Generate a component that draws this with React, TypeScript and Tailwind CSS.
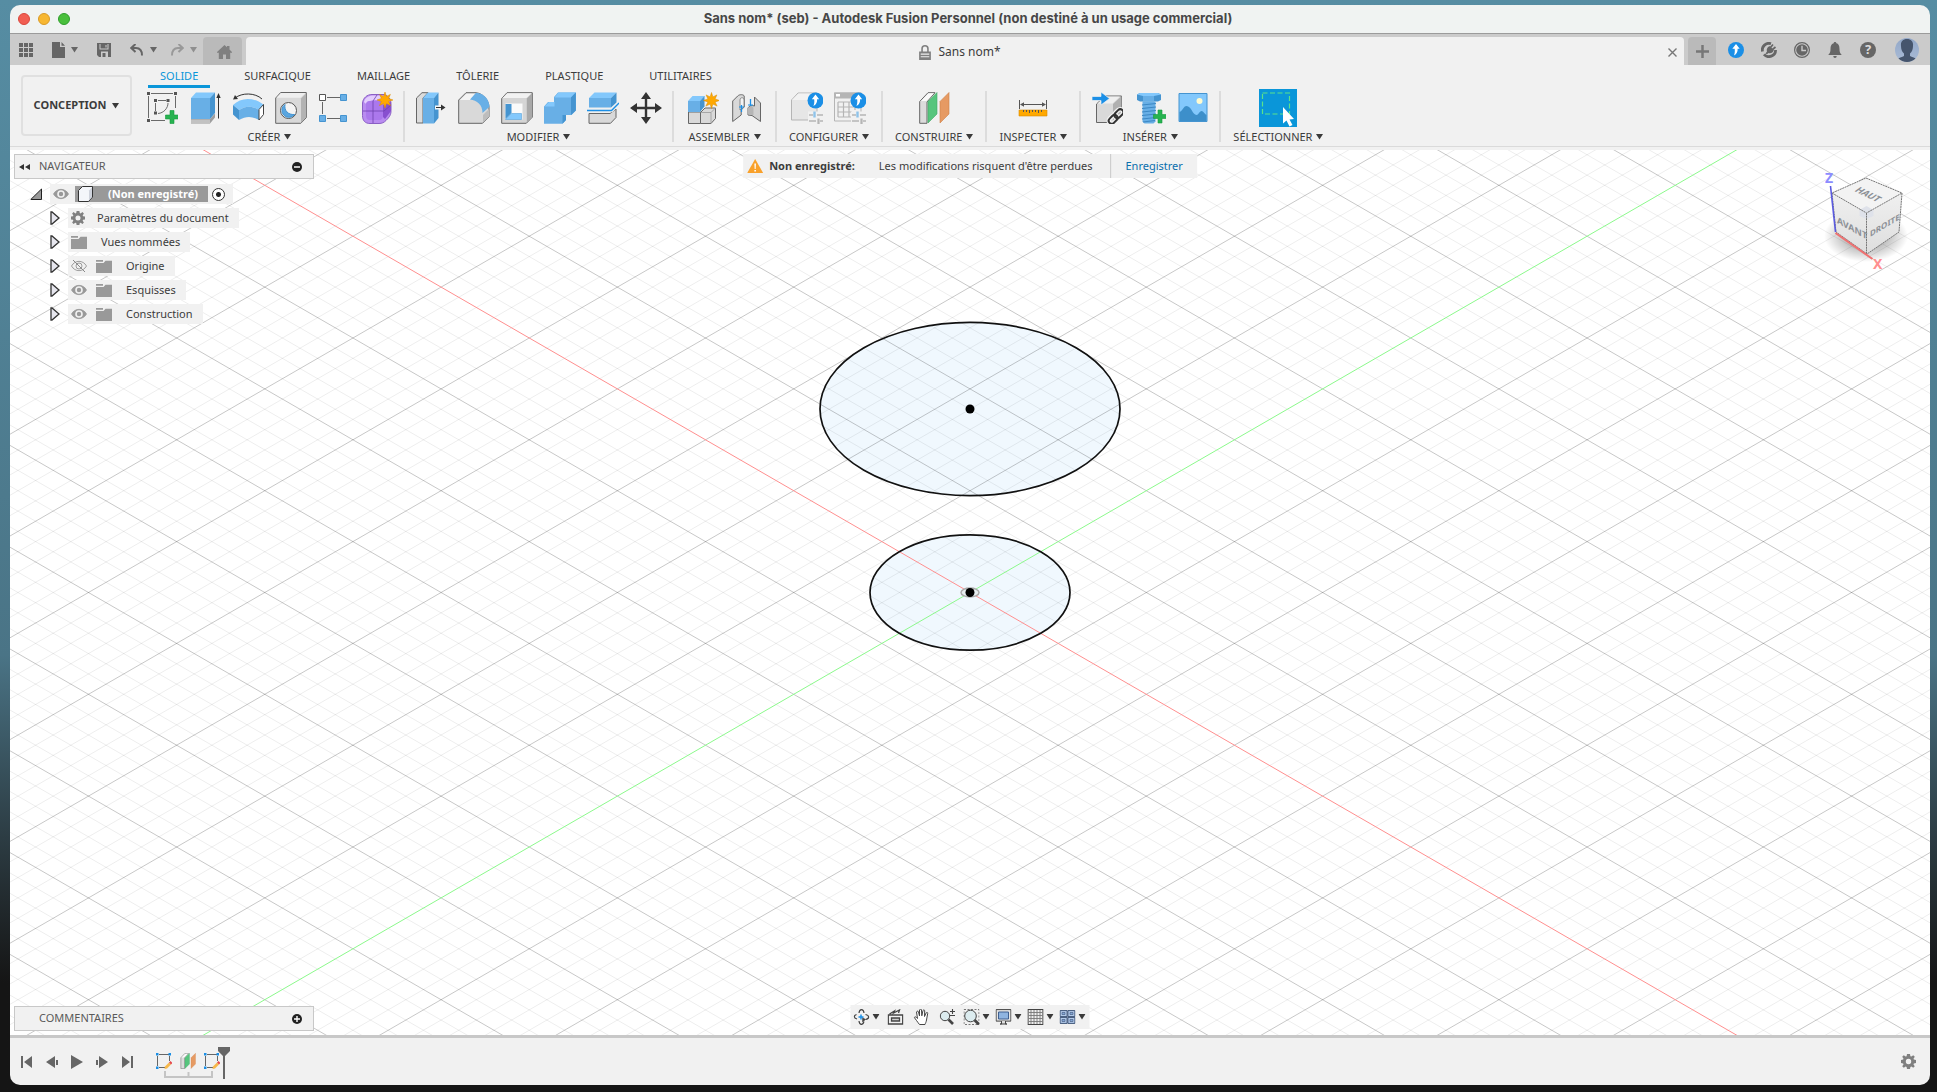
import type { ReactNode } from 'react';

const Caret = ({ className = 'fill-[#3a3a3a]' }: { className?: string }) => (
  <svg width="7" height="6" viewBox="0 0 7 6" className={className} aria-hidden="true">
    <path d="M0 0h7L3.5 5.5z" />
  </svg>
);

const Icon32 = ({ children }: { children: ReactNode }) => (
  <svg width="32" height="32" viewBox="0 0 32 32" fill="none" aria-hidden="true">{children}</svg>
);

const Burst = ({ x, y }: { x: number; y: number }) => (
  <path
    transform={`translate(${x} ${y})`}
    fill="#ffa800"
    stroke="#d98c00"
    strokeWidth=".5"
    d="M0-8 1.4-3.6 5.4-5.6 3.6-1.6 8 0 3.6 1.4 5.6 5.6 1.4 3.6 0 8-1.4 3.6-5.6 5.6-3.6 1.4-8 0-3.6-1.6-5.4-5.6-1.4-3.6z"
  />
);

const Plus = ({ x, y }: { x: number; y: number }) => (
  <path
    transform={`translate(${x} ${y})`}
    fill="#27b350"
    stroke="#159a3c"
    strokeWidth=".6"
    d="M-2-6.5h4V-2h4.5v4H2v4.5h-4V2h-4.5v-4H-2z"
  />
);

const BlueBadge = ({ x, y, r = 7 }: { x: number; y: number; r?: number }) => (
  <g transform={`translate(${x} ${y}) scale(${r / 7})`}>
    <circle r="7" fill="#1b8fe6" />
    <path d="M0-5.2 3.2-1H1.4C1.6 1.4.8 3.6-1.8 4.8-.8 3-1-.4-1.2-1h-2z" fill="#fff" />
  </g>
);

const Sliders = ({ x, y }: { x: number; y: number }) => (
  <g transform={`translate(${x} ${y})`}>
    <path d="M-1-1h16v12H-1z" fill="#f1f1f1" />
    <path d="M0 2.5h4m4 0h6M0 8.5h7m4 0h3" stroke="#b5b5b5" strokeWidth="1.6" />
    <path d="M5.5-1v6" stroke="#8fc3ea" strokeWidth="2.4" />
    <path d="M9.5 6v6" stroke="#b5b5b5" strokeWidth="2.2" />
  </g>
);

const CreateSketch = () => (
  <Icon32>
    <path d="M5 1.5h22M2.5 4v22M29.5 4v12M5 28.5h14" stroke="#6a6a6a" />
    <path d="M12 8.5h8M9.5 11v8M22 11c0 5-4 10-10 10.5" stroke="#6a6a6a" />
    <path d="M1 0h3v3H1zM28 0h3v3h-3zM1 27h3v3H1zM8 7h3v3H8zM20.5 7h3v3h-3zM8 19.5h3v3H8z" fill="#555" />
    <Plus x={26} y={25} />
  </Icon32>
);

const Extrude = () => (
  <Icon32>
    <path d="M2 27h19l5-5.5v4L21 31.5H2z" fill="#9e9e9e" />
    <path d="M2 27.5h19v4H2z" fill="#c2c2c2" />
    <path d="M2 6h19v21H2z" fill="#68afe6" />
    <path d="M2 6l5-5.5h19L21 6z" fill="#83c8fc" />
    <path d="M21 6l5-5.5V21l-5 6z" fill="#4594d0" />
    <path d="M29.5 26.5V3" stroke="#333" />
    <path d="M29.5 1l2.2 5h-4.4z" fill="#333" />
  </Icon32>
);

const Revolve = () => (
  <Icon32>
    <path d="M3 6C10 .5 23 .5 30 7" stroke="#333" />
    <path d="M1 7.5l2-4.5 3 4z" fill="#333" />
    <path d="M1 13C9 5 22 5 32 13l-5 5c-7-4.5-13-4.5-20 0z" fill="#83c8fc" />
    <path d="M7 18c7-4.5 13-4.5 20 0v10c-7-4-13-4-20 0z" fill="#68afe6" />
    <path d="M1 13l6 5v10l-6-5.5z" fill="#4594d0" />
    <path d="M27 17.5l4.5-5v10l-4.5 5.5z" fill="#fff" stroke="#444" />
  </Icon32>
);

const Hole = () => (
  <Icon32>
    <path d="M.7 6l5-5.5h25.6v25.2l-5.5 5.6H.7z" fill="#d9d9d9" stroke="#666" />
    <path d="M1.5 5.8L6 1h24.5l-5 4.8z" fill="#efefef" />
    <path d="M26 6.5L31 1.5v24l-5 5.3z" fill="#b3b3b3" />
    <circle cx="13.5" cy="18.5" r="8" fill="#f4f4f4" stroke="#555" />
    <path d="M10 12.5c-1 6 3 10.5 9.5 10A7 7 0 1 1 10 12.5z" fill="#5aa6e0" stroke="#4594d0" />
  </Icon32>
);

const PatternIcon = () => (
  <Icon32>
    <path d="M9 5.5h13M4.5 10v12M9 26.5h13" stroke="#666" />
    <path d="M1.5 2.5h6v6h-6z" fill="#fff" stroke="#555" />
    <path d="M22.5 2.5h6v6h-6zM1.5 23.5h6v6h-6zM22.5 23.5h6v6h-6z" fill="#68afe6" stroke="#4594d0" />
  </Icon32>
);

const CreateForm = () => (
  <Icon32>
    <path d="M1.5 11C2 6 6 2.5 11 2.5h12c4 1 7 5 7 9v7c0 4-1 6-5 10-2 2-4 3-7 3H9c-5 0-7.5-3-7.5-8z" fill="#b98cf0" stroke="#8a5fc4" />
    <path d="M3 10c1-4 4-6 8-6.5h10c2 0 4 2 4 4-5 1.5-14-1-18 3-2 1-2 2-4-.5z" fill="#e3cdfd" />
    <path d="M5 13c0-3 1-4 4-4h9c3 0 4 1 4 4v10c0 3-1 5-4 5H9c-3 0-4-2-4-5z" fill="#ab78ec" />
    <path d="M22 13l8-3v9l-6 8-2-2z" fill="#8850cf" />
    <path d="M2 19h21l7-6M12 9v22M12 9l4-6" stroke="#6f43ae" strokeWidth=".8" />
    <Burst x={24} y={8} />
  </Icon32>
);

const PressPull = () => (
  <Icon32>
    <path d="M1.5 6L7 .7h6L8 6v25H1.5z" fill="#dcdcdc" stroke="#666" />
    <path d="M8 6h11v25.500H8z" fill="#68afe6" />
    <path d="M8 6l5-5.5h10.5L19 6z" fill="#83c8fc" />
    <path d="M19 6l4.5-5.5V26L19 31.5z" fill="#4594d0" />
    <path d="M20 13.5h6v4h-6z" fill="#f4f4f4" />
    <path d="M21 15.5h7" stroke="#333" strokeWidth="1.2" />
    <path d="M26 12.5l4.5 3-4.5 3z" fill="#333" />
  </Icon32>
);

const Fillet = () => (
  <Icon32>
    <path d="M.7 8L8 .7h10c8 1 12.5 8 13 14v10l-6.5 6.6H.7z" fill="#d9d9d9" stroke="#666" />
    <path d="M2 8l6.5-6.3H18L12 8z" fill="#f4f4f4" />
    <path d="M25 23l6-6v7.5l-6 6z" fill="#bdbdbd" />
    <path d="M12 7.5L18 .7c8 .3 13.5 7 13.5 14L24.5 21C24.5 13 19 8 12 7.5z" fill="#68afe6" />
  </Icon32>
);

const Shell = () => (
  <Icon32>
    <path d="M.7 6.5L6 .7h25.3v24.5l-6 6.1H.7z" fill="#d5d5d5" stroke="#666" />
    <path d="M1.5 6L6.3 1.2h24.4L25.5 6z" fill="#f2f2f2" />
    <path d="M25.8 6.5L31 1.2v23.8l-5.2 5.5z" fill="#a9a9a9" />
    <path d="M4.5 11.5h17v16h-17z" fill="#fafafa" />
    <path d="M4.5 12h6v9l-6 6z" fill="#4594d0" />
    <path d="M4.5 27.5l6-6h10v6z" fill="#83c8fc" stroke="#4594d0" strokeWidth=".5" />
  </Icon32>
);

const Combine = () => (
  <Icon32>
    <path d="M0 14.5L4 10h6V5l4-4.5h18v18L27.5 23H22v5l-3.5 3.8H0z" fill="#68afe6" />
    <path d="M10.5 5.5l4-5h17.2L27 5.5zM.5 14.5L5 10h5.5v4.5z" fill="#83c8fc" />
    <path d="M27 5.5l4.8-5v18L27 23zM18.5 23H22v5l-3.5 3.8z" fill="#4594d0" />
  </Icon32>
);

const OffsetFace = () => (
  <Icon32>
    <path d="M2 21.5h21l6-4.5v8.5l-5.5 5.8H2z" fill="#d9d9d9" stroke="#666" />
    <path d="M2 6h22v9.5H2z" fill="#68afe6" />
    <path d="M2 6l5.5-5.5h22L24 6z" fill="#83c8fc" />
    <path d="M24 6l5.5-5.5v10L24 15.5z" fill="#4594d0" />
    <path d="M0 18.5h24.5L32 11" stroke="#f1f1f1" strokeWidth="3.5" />
    <path d="M0 18.5h24.5L32 11" stroke="#1b8fe6" strokeWidth="1.4" />
  </Icon32>
);

const Move = () => (
  <Icon32>
    <path d="M16 4v24M4 16h24" stroke="#333" strokeWidth="2.4" />
    <path d="M16 0l5 7H11zM16 32l5-7H11zM0 16l7-5v10zM32 16l-7-5v10z" fill="#333" />
  </Icon32>
);

const NewComponent = () => (
  <Icon32>
    <path d="M1.5 20h12v11.5h-12z" fill="#d9d9d9" stroke="#666" />
    <path d="M13.5 20.5l4.5-4.5h10.5v10.5l-4.5 5H13.5z" fill="#d9d9d9" stroke="#666" />
    <path d="M14 20.5h10v11M24 20.5l4.5-4.5" stroke="#999" strokeWidth=".8" />
    <path d="M1 9h12v11H1z" fill="#68afe6" />
    <path d="M1 9l4.500-5H18L13 9z" fill="#83c8fc" />
    <path d="M13 9l4.5-5v10.500L13 20z" fill="#4594d0" />
    <Burst x={24.5} y={8.5} />
  </Icon32>
);

const Joint = () => (
  <Icon32>
    <path d="M2.7 29.5V9l5-5c2-2 6-1.500 6.500 0V15l-3 3v5z" fill="#d9d9d9" stroke="#666" />
    <path d="M10 8c0-3 4-3 4 0v7l-4 3z" fill="#f4f4f4" stroke="#777" strokeWidth=".8" />
    <path d="M30.5 29.5V11l-6-6v9c-2-1-6 0-6.500 2v7l4 .5z" fill="#d0d0d0" stroke="#666" />
    <path d="M18 16c1-2 5-2 5.500 0v7l-5.500-.5z" fill="#b5b5b5" />
    <path d="M11.5 13v7M20.5 7v7" stroke="#1b8fe6" strokeWidth="1.3" />
    <path d="M9 15h5M18 13h5" stroke="#1b8fe6" />
  </Icon32>
);

const ConfigureModel = () => (
  <Icon32>
    <path d="M.5 8L7 1h19v22l-4 5H.5z" fill="#e6e6e6" stroke="#b5b5b5" />
    <path d="M1 8l6.500-6.500h17.500L20 8z" fill="#f2f2f2" />
    <BlueBadge x={24.5} y={8.5} r={8} />
    <Sliders x={18} y={20.5} />
  </Icon32>
);

const ConfigureTable = () => (
  <Icon32>
    <path d="M.5 1h26.500v28H.5z" fill="#f1f1f1" stroke="#b5b5b5" />
    <path d="M0 .5h27.500v6H0z" fill="#b5b5b5" />
    <path d="M2 2h4v2.500H2z" fill="#fff" />
    <path d="M4 10h19M4 15h19M4 20h14M4 25h13M4 10v15M9.5 10v15M15 10v15M21 10v8" stroke="#b5b5b5" strokeWidth="1.2" />
    <BlueBadge x={24.5} y={8.5} r={8} />
    <Sliders x={18} y={20.5} />
  </Icon32>
);

const PlaneShape = () => (
  <>
    <path d="M1.7 9.5L10 .7h7L9 10v21.3H1.7z" fill="#dcdcdc" stroke="#666" />
    <path d="M3 9L10.5 1.3H16L8.5 9z" fill="#fafafa" />
    <path d="M10 9.5L19 .5V22l-9 9z" fill="#56c57d" stroke="#3fa765" strokeWidth=".6" />
    <path d="M22 9.5L31 .5V22l-9 9z" fill="#e69a63" stroke="#cf8048" strokeWidth=".6" />
  </>
);

const Construct = () => <Icon32><PlaneShape /></Icon32>;

const Measure = () => (
  <Icon32>
    <path d="M2.5 8v9M29.5 8v9M4 12.5h24" stroke="#555" />
    <path d="M3 12.5l4-2.200v4.400zM29 12.5l-4-2.200v4.400z" fill="#555" />
    <path d="M2 18h28v6H2z" fill="#ffa800" stroke="#d98c00" strokeWidth=".6" />
    <path d="M6.500 18v2M9.500 18v2M12.500 18v3M15.500 18v2M18.500 18v2M21.500 18v3M24.500 18v2" stroke="#555" />
  </Icon32>
);

const InsertDerive = () => (
  <Icon32>
    <path d="M5.5 12L14 4h16.500v16L23 30.500H5.5z" fill="#d9d9d9" stroke="#666" />
    <path d="M22 12l8.5-8v16L22 29z" fill="#b0b0b0" />
    <path d="M6.5 11.5L14 4.5h15l-7.500 7z" fill="#efefef" />
    <path d="M1 4.5h9V0l8.5 6.500L10 13V8.500H1z" fill="#1b8fe6" stroke="#f1f1f1" strokeWidth=".7" />
    <g transform="rotate(-45 25 24.5)">
      <rect x="16" y="21.500" width="10" height="6" rx="3" stroke="#f1f1f1" strokeWidth="4.500" />
      <rect x="24" y="21.500" width="10" height="6" rx="3" stroke="#f1f1f1" strokeWidth="4.500" />
      <rect x="16" y="21.500" width="10" height="6" rx="3" stroke="#333" strokeWidth="2" />
      <rect x="24" y="21.500" width="10" height="6" rx="3" stroke="#333" strokeWidth="2" />
    </g>
  </Icon32>
);

const Fastener = () => (
  <Icon32>
    <path d="M3 2.5L6 1h18l3 1.500V8l-3 1.500H6L3 8z" fill="#4594d0" />
    <path d="M3 2.5L6 1h18l3 1.500-7 1.500H9z" fill="#83c8fc" />
    <path d="M9 4h11v5.500H9z" fill="#68afe6" />
    <path d="M8.5 9.5h13v20l-2 2h-9l-2-2z" fill="#68afe6" />
    <path d="M8 13l14-1.500M8 16.500L22 15M8 20l14-1.500M8 23.500L22 22M8 27l14-1.500M9 30l12-1.500" stroke="#3d88c4" strokeWidth="1.2" />
    <Plus x={26} y={24.5} />
  </Icon32>
);

const ImageIcon = () => (
  <Icon32>
    <path d="M2 1.5h28v28H2z" fill="#83c8fc" stroke="#4594d0" />
    <circle cx="22.5" cy="9" r="3" fill="#fffbd0" />
    <path d="M2.5 20c3-1 4-6 7-6 5 0 6 9 10 9 2 0 3-4 5-4s3 3 5 4v6h-27z" fill="#3d8fca" />
  </Icon32>
);

const SelectIcon = () => (
  <svg width="38" height="38" viewBox="0 0 38 38" fill="none" aria-hidden="true">
    <path d="M0 0h38v38H0z" fill="#0a96d9" />
    <path d="M3.5 4h27v21h-27z" stroke="#5be28b" strokeWidth="1.2" strokeDasharray="5 2.5" />
    <path d="M24 18v16.500l3.500-3 3 6 3-1.500-3-5.500 4.500-.5z" fill="#fff" />
  </svg>
);

const ribbonTabs = ['SOLIDE', 'SURFACIQUE', 'MAILLAGE', 'TÔLERIE', 'PLASTIQUE', 'UTILITAIRES'];

const toolGroups = [
  { label: 'CRÉER', pad: 'px-[10px]', tools: [CreateSketch, Extrude, Revolve, Hole, PatternIcon, CreateForm] },
  { label: 'MODIFIER', pad: 'px-[10px]', tools: [PressPull, Fillet, Shell, Combine, OffsetFace, Move] },
  { label: 'ASSEMBLER', pad: 'px-[13px]', tools: [NewComponent, Joint] },
  { label: 'CONFIGURER', pad: 'px-3', tools: [ConfigureModel, ConfigureTable] },
  { label: 'CONSTRUIRE', pad: 'px-3', tools: [Construct] },
  { label: 'INSPECTER', pad: 'px-3', tools: [Measure] },
  { label: 'INSÉRER', pad: 'px-[10px]', tools: [InsertDerive, Fastener, ImageIcon] },
  { label: 'SÉLECTIONNER', pad: 'px-3', tools: [SelectIcon] },
];

const TitleBar = () => (
  <header className="flex h-[29px] shrink-0 items-center border-b border-[#9b9b9b] bg-[#f0f3f2] px-2">
    <div className="flex w-20 gap-2">
      <button aria-label="Fermer" className="size-3 rounded-full border border-[#d9473c] bg-[#f15e52]" />
      <button aria-label="Réduire" className="size-3 rounded-full border border-[#d99a26] bg-[#f7b731]" />
      <button aria-label="Agrandir" className="size-3 rounded-full border border-[#2f9e2c] bg-[#49bf3c]" />
    </div>
    <h1 className="flex-1 pr-1 text-center font-['Inter',sans-serif] text-[13px] font-bold text-[#474747]">
      Sans nom* (seb) - Autodesk Fusion Personnel (non destiné à un usage commercial)
    </h1>
    <div className="w-20" />
  </header>
);

const QuickBar = () => (
  <div className="flex h-[31px] shrink-0 bg-[#cbcbcb] text-[#666]">
    <div className="flex w-[193px] items-center pl-[9px] fill-[#666]">
      <button aria-label="Panneau de données" className="mr-[19px]">
        <svg width="14" height="14" viewBox="0 0 14 14">
          <path d="M0 0h4v4H0zM5 0h4v4H5zM10 0h4v4h-4zM0 5h4v4H0zM5 5h4v4H5zM10 5h4v4h-4zM0 10h4v4H0zM5 10h4v4H5zM10 10h4v4h-4z" />
        </svg>
      </button>
      <button aria-label="Fichier" className="mr-[19px] flex items-center gap-[6px]">
        <svg width="13" height="16" viewBox="0 0 13 16">
          <path d="M0 0h8v5h5v11H0zM9.5 0L13 3.800H9.500z" />
        </svg>
        <Caret className="fill-[#666]" />
      </button>
      <button aria-label="Enregistrer le document" className="mr-[19px]">
        <svg width="14" height="14" viewBox="0 0 14 14">
          <path fillRule="evenodd" d="M0 0h14v14H2l-2-2zM2.500 1v5.500h9V1h-1v4.500h-7V1zM4 8.500V14h1.500v-4h3v4H11V8.500zM8.500 2h1v2.500h-1z" />
        </svg>
      </button>
      <button aria-label="Annuler" className="mr-[13px] flex items-center gap-[6px]">
        <svg width="14" height="12" viewBox="0 0 14 12" fill="none" stroke="#666" strokeWidth="2">
          <path d="M5.500 0L1.300 4l4.200 4M2 4h4c4 0 6 2.500 6 7.500" />
        </svg>
        <Caret className="fill-[#666]" />
      </button>
      <button aria-label="Rétablir" className="flex items-center gap-[6px]">
        <svg width="14" height="12" viewBox="0 0 14 12" fill="none" stroke="#999" strokeWidth="2">
          <path d="M8.500 0l4.200 4-4.200 4M12 4H8C4 4 2 6.500 2 11.500" />
        </svg>
        <Caret className="fill-[#8f8f8f]" />
      </button>
    </div>
    <button aria-label="Accueil" className="mt-[3px] flex w-[39px] items-center justify-center rounded-t bg-[#bababa] pt-[2px] pl-[3px]">
      <svg width="15" height="14" viewBox="0 0 15 14" className="fill-[#808080]">
        <path d="M7.5 0L10 2.300V1h2.500v3.500L15 7v.8h-1.800V14H9V9.500H6V14H1.800V7.800H0V7z" />
      </svg>
    </button>
    <div className="mt-[3px] ml-1 flex flex-1 items-center rounded-t bg-[#f1f1f1] pt-[2px] pl-[6px]">
      <div className="flex flex-1 items-center justify-center gap-[7px] text-[12px] text-[#3c3c3c]">
        <svg width="12" height="15" viewBox="0 0 11 14" className="fill-[#808080]">
          <path fillRule="evenodd" d="M2 6V3.500a3.500 3.500 0 0 1 7 0V6h2v8H0V6zM3.500 6h4V3.500a2 2 0 0 0-4 0zM1.500 8v1h8V8zm0 2.500v1h8v-1z" />
        </svg>
        <span>Sans nom*</span>
      </div>
      <button aria-label="Fermer l'onglet" className="mr-[7px]">
        <svg width="9" height="9" viewBox="0 0 9 9" stroke="#777" strokeWidth="1.4">
          <path d="M.5.5l8 8M8.500.5l-8 8" />
        </svg>
      </button>
    </div>
    <button aria-label="Nouvel onglet" className="mt-[3px] ml-1 flex w-7 items-center justify-center rounded-t bg-[#bababa]">
      <svg width="13" height="13" viewBox="0 0 13 13" stroke="#777" strokeWidth="2.5">
        <path d="M6.5 0v13M0 6.500h13" />
      </svg>
    </button>
    <div className="flex items-center gap-[17px] pr-[11px] pl-3">
      <button aria-label="Mise à niveau">
        <svg width="16" height="16" viewBox="0 0 16 16"><BlueBadge x={8} y={8} r={8} /></svg>
      </button>
      <button aria-label="Extensions">
        <svg width="16" height="16" viewBox="0 0 16 16" fill="none" stroke="#666">
          <path d="M10 1.700A6.600 6.600 0 0 0 1.500 9.500" strokeWidth="2.800" />
          <path d="M3 12.300A6.600 6.600 0 0 0 14.600 8" strokeWidth="2.800" />
          <path d="M4.500 11.500l1.500-2c-.8-2.500.8-5.200 3-5.200l3.700 3.700c0 2.200-2.700 3.700-5.200 3l-1.500 1.300z" fill="#666" stroke="none" />
          <path d="M9.500 5.500L12 2.500M11.500 7.500L14.500 5" strokeWidth="1.700" />
        </svg>
      </button>
      <button aria-label="Statut des travaux">
        <svg width="16" height="16" viewBox="0 0 16 16" fill="none" stroke="#666">
          <circle cx="8" cy="8" r="7.400" strokeWidth="1.200" />
          <circle cx="8" cy="8" r="5.800" fill="#666" stroke="none" />
          <path d="M8 3.800V8.500h4" stroke="#cbcbcb" strokeWidth="1.400" />
        </svg>
      </button>
      <button aria-label="Notifications">
        <svg width="16" height="16" viewBox="0 0 16 16" fill="#666">
          <path d="M8 0c1 0 1.300.6 1.300 1.300C12 2 12.500 4.500 12.500 7c0 3 .6 4.500 2.300 6H1.200c1.700-1.500 2.300-3 2.300-6 0-2.500.5-5 3.200-5.700C6.700.6 7 0 8 0zM6.300 14h3.400c0 1-.7 2-1.700 2s-1.700-1-1.700-2z" />
        </svg>
      </button>
      <button aria-label="Aide" className="flex size-4 items-center justify-center rounded-full bg-[#666] text-[13px] font-bold text-[#dcdcdc]">
        ?
      </button>
      <button aria-label="Mon profil" className="ml-[2px]">
        <svg width="24" height="24" viewBox="0 0 24 24">
          <defs>
            <linearGradient id="avatarBg" x1="0" y1="0" x2="0" y2="1">
              <stop offset="0" stopColor="#93a8c8" />
              <stop offset="1" stopColor="#a9bbd6" />
            </linearGradient>
          </defs>
          <circle cx="12" cy="12" r="12" fill="url(#avatarBg)" />
          <path d="M12 1c4.500 0 6.500 3 6 7-.1 3-.8 6-3 7.500V18c2 1.500 4 1.300 5.500 2.500A12 12 0 0 1 12 24a12 12 0 0 1-8.500-3.500C5 19.300 7 19.500 9 18v-2.500C6.800 14 6.100 11 6 8c-.5-4 1.500-7 6-7z" fill="#46556d" />
        </svg>
      </button>
    </div>
  </div>
);

const Ribbon = () => (
  <div className="flex h-[82px] shrink-0 border-b border-[#dadada] bg-[#f1f1f1] text-[#3c3c3c]">
    <button className="mt-[10px] ml-[11px] flex h-[61px] w-[111px] items-center justify-center gap-[6px] rounded border-2 border-[#e0e0e0] font-bold">
      CONCEPTION <Caret />
    </button>
    <div className="ml-1">
      <nav className="flex gap-[22px] pl-3">
        {ribbonTabs.map((tab, i) => (
          <button
            key={tab}
            className={
              i === 0
                ? 'h-[23px] border-b-[3px] border-[#0a96d9] px-3 pt-[2px] text-[#0a96d9]'
                : 'h-[23px] border-b-[3px] border-transparent px-3 pt-[2px]'
            }
          >
            {tab}
          </button>
        ))}
      </nav>
      <div className="flex">
        {toolGroups.map((group, i) => (
          <div key={group.label} className="flex pt-[2px]">
            <div className={`flex flex-col items-center ${group.pad}`}>
              <div className="flex h-[36px] items-center gap-[11px]">
                {group.tools.map((Tool, n) => (
                  <button key={n} aria-label={`${group.label} ${n + 1}`}>
                    <Tool />
                  </button>
                ))}
              </div>
              <button className="flex h-[21px] items-center gap-1 pt-[1px]">
                {group.label} <Caret />
              </button>
            </div>
            {i < toolGroups.length - 1 && <div className="mt-[1px] h-[51px] w-[2px] bg-[#dcdcdc]" />}
          </div>
        ))}
      </div>
    </div>
  </div>
);

const slope = 0.5774;
const minorStep = 20.36;
const steps = Array.from({ length: 121 }, (_, i) => i - 60);

const Scene = () => (
  <svg className="absolute inset-0 h-full w-full bg-white" aria-hidden="true">
    <svg x="50%" y="50%" overflow="visible">
      <ellipse cy="-183.5" rx="150" ry="86.6" fill="#f0f8fe" />
      <ellipse rx="100" ry="57.7" fill="#f0f8fe" />
      {steps.filter((i) => i !== 0).map((i) => (
        <g key={i} stroke="#000" strokeOpacity={i % 5 === 0 ? 0.22 : 0.07}>
          <line x1="-1400" y1={i * minorStep - 1400 * slope} x2="1400" y2={i * minorStep + 1400 * slope} />
          <line x1="-1400" y1={i * minorStep + 1400 * slope} x2="1400" y2={i * minorStep - 1400 * slope} />
        </g>
      ))}
      <line x1="-1400" y1={-1400 * slope} x2="1400" y2={1400 * slope} stroke="#ff8f8f" />
      <line x1="-1400" y1={1400 * slope} x2="1400" y2={-1400 * slope} stroke="#8cf98c" />
      <g fill="none" stroke="#111" strokeWidth="1.7">
        <ellipse cy="-183.5" rx="150" ry="86.6" />
        <ellipse rx="100" ry="57.7" />
      </g>
      <ellipse rx="9" ry="4.5" fill="#e8eef0" stroke="#aaa" strokeWidth="1.5" />
      <circle cy="-183.5" r="4.5" />
      <circle r="4.5" />
    </svg>
  </svg>
);

const ViewCube = () => (
  <svg
    width="90"
    height="115"
    viewBox="0 0 90 115"
    className="absolute top-[18px] right-[20px] font-['Noto_Sans',sans-serif]"
    role="img"
    aria-label="Cube de vue"
  >
    <defs>
      <radialGradient id="cubeShadow">
        <stop offset="0" stopColor="#000" stopOpacity=".5" />
        <stop offset="1" stopColor="#000" stopOpacity="0" />
      </radialGradient>
      <linearGradient id="cubeSide" x1="0" y1="0" x2="0" y2="1">
        <stop offset="0" stopColor="#f4f4f4" />
        <stop offset="1" stopColor="#dedede" />
      </linearGradient>
    </defs>
    <ellipse cx="46" cy="68" rx="42" ry="26" fill="url(#cubeShadow)" />
    <path d="M46 10l36 15-3 39-32 22-31-22-4-39z" fill="url(#cubeSide)" />
    <path d="M46 10l36 15-35.500 20L12 25z" fill="#f3f3f3" />
    <path d="M46.500 38l7 4v6l-7 3-7-3v-6z" fill="#dfe2ea" />
    <path d="M46 10l36 15-3 39-32 22-31-22-4-39zM12 25l34.500 20L82 25M46.500 45v41" fill="none" stroke="#777" strokeDasharray="2 .6" />
    <path d="M10.500 18l5 46" stroke="#5a5ae0" strokeWidth="1.600" />
    <path d="M15.500 65l37 26" stroke="#f07070" strokeWidth="2" />
    <g fontSize="9" fill="#8c9096" fontWeight="bold">
      <text transform="translate(34 23) rotate(26) skewX(-28)">HAUT</text>
      <text transform="translate(17 55) skewY(29)">AVANT</text>
      <text transform="translate(50 69) skewY(-31)" fontSize="8">DROITE</text>
    </g>
    <text x="5" y="15" fontSize="14" fontWeight="bold" fill="#8c8cff">Z</text>
    <text x="53" y="101" fontSize="14" fontWeight="bold" fill="#ff8f8f">X</text>
  </svg>
);

const Eye = ({ off }: { off?: boolean }) => (
  <svg width="16" height="12" viewBox="0 0 16 12" fill="none" aria-hidden="true">
    <path
      d="M.5 6C4-.2 12-.2 15.500 6 12 12.200 4 12.200.5 6z"
      fill={off ? 'none' : '#999'}
      stroke={off ? '#888' : '#999'}
      strokeWidth=".8"
    />
    <circle cx="8" cy="6" r="3" fill={off ? 'none' : '#999'} stroke={off ? '#888' : '#f1f1f1'} strokeWidth={off ? 0.8 : 1.6} />
    {off && <path d="M2 0l12 12" stroke="#888" />}
  </svg>
);

const Folder = () => (
  <svg width="16" height="13" viewBox="0 0 16 13" className="fill-[#999]" aria-hidden="true">
    <path d="M0 0h7v1.800H0zM0 3h7.500L9.500.8H16V13H0z" />
  </svg>
);

const Gear = ({ size }: { size: number }) => (
  <svg width={size} height={size} viewBox="0 0 15 15" className="fill-[#808080]" aria-hidden="true">
    <path
      fillRule="evenodd"
      d="M6 0h3l.4 2.200 1 .4L12.200 1.200 13.800 2.800 12.500 4.700l.4.9L15 6v3l-2.100.4-.4 1 1.300 1.800-1.600 1.600-1.800-1.300-1 .4L9 15H6l-.4-2.100-1-.4-1.800 1.300-1.600-1.600 1.300-1.800-.4-1L0 9V6l2.100-.4.4-.9L1.200 2.800 2.800 1.200l1.800 1.400 1-.4zM7.500 4.800a2.700 2.700 0 1 0 0 5.400 2.700 2.700 0 0 0 0-5.400z"
    />
  </svg>
);

const treeItems = [
  { label: 'Paramètres du document', icon: <Gear size={14} />, gap: 'gap-3' },
  { label: 'Vues nommées', icon: <Folder />, gap: 'gap-[14px]' },
  { label: 'Origine', eye: 'off', icon: <Folder />, gap: 'gap-[14px]' },
  { label: 'Esquisses', eye: 'on', icon: <Folder />, gap: 'gap-[14px]' },
  { label: 'Construction', eye: 'on', icon: <Folder />, gap: 'gap-[14px]' },
];

const Navigator = () => (
  <section className="w-[304px] pt-1 pl-1">
    <div className="flex h-[25px] items-center border border-[#c8c8c8] bg-[#f1f1f1] pr-[11px] pl-1 text-[#5a5a5a]">
      <button aria-label="Réduire le navigateur">
        <svg width="11" height="6" viewBox="0 0 11 6"><path d="M5 0v6L0 3zM11 0v6L6 3z" fill="#333" /></svg>
      </button>
      <h2 className="ml-[9px] flex-1">NAVIGATEUR</h2>
      <button aria-label="Masquer le navigateur">
        <svg width="10" height="10" viewBox="0 0 10 10"><circle cx="5" cy="5" r="5" fill="#222" /><path d="M2 4.200h6v1.600H2z" fill="#fff" /></svg>
      </button>
    </div>
    <ul className="flex flex-col gap-1 pt-[5px] text-[#3c3c3c]">
      <li className="flex items-center pl-4">
        <button aria-label="Réduire" className="mr-2">
          <svg width="12" height="12" viewBox="0 0 12 12"><path d="M11.500 1v10.500H.8z" fill="#999" stroke="#222" /></svg>
        </button>
        <div className="flex h-[20px] items-center bg-[#f1f1f1] pl-[3px]">
          <Eye />
          <span className="ml-[6px] flex h-4 items-center bg-[#999] pr-[10px] font-bold text-white">
            <svg width="18" height="16" viewBox="0 0 18 16" className="mr-[15px]" aria-hidden="true">
              <path d="M3.500 4.500l4-4h10v10.500l-4 4.500h-10z" fill="#f4f6fa" stroke="#333" />
              <path d="M14 4.500L17 1.500v9.300L14 14.500z" fill="#cfd3dc" />
            </svg>
            (Non enregistré)
          </span>
          <label className="flex items-center pr-2 pl-1">
            <input
              type="radio"
              defaultChecked
              aria-label="Activer le composant"
              className="size-[13px] appearance-none rounded-full border border-[#333] bg-[radial-gradient(#222_2px,#fff_3px)]"
            />
          </label>
        </div>
      </li>
      {treeItems.map((item) => (
        <li key={item.label} className="flex items-center pl-9">
          <button aria-label={`Développer ${item.label}`} className="mr-2">
            <svg width="10" height="14" viewBox="0 0 10 14">
              <path d="M1 1h1l7 6-7 6H1z" fill="#e6e6ee" stroke="#333" strokeWidth="1.300" />
            </svg>
          </button>
          <div className={`flex h-[20px] items-center bg-[#f1f1f1] pr-[10px] pl-[3px] ${item.gap}`}>
            {item.eye && <span className="-mr-[5px]"><Eye off={item.eye === 'off'} /></span>}
            {item.icon}
            <span>{item.label}</span>
          </div>
        </li>
      ))}
    </ul>
  </section>
);

const SaveNotice = () => (
  <div className="absolute top-1 left-1/2 flex h-6 -translate-x-1/2 items-center whitespace-nowrap bg-[#f1f1f1] text-[#3c3c3c]">
    <svg width="16" height="14" viewBox="0 0 16 14" className="ml-1" aria-hidden="true">
      <path d="M8 0l8 14H0z" fill="#f9a12b" />
      <path d="M7.200 4.500h1.600L8.500 10h-1zM7.200 11h1.600v1.500H7.200z" fill="#fff" />
    </svg>
    <strong className="ml-[6px]">Non enregistré:</strong>
    <span className="mr-[18px] ml-6">Les modifications risquent d'être perdues</span>
    <a href="#" className="flex h-full items-center border-l border-[#c8c8c8] px-[14px] text-[#0a6fad]">
      Enregistrer
    </a>
  </div>
);

const viewTools = [
  {
    name: 'Orbite',
    caret: true,
    art: (
      <g fill="none" stroke="#444" strokeWidth="1.2">
        <path d="M5.500 4c.5-4.500 4.500-4.500 5 0M5.500 12c.5 4.500 4 4.500 5 .5M3.500 10C0 9 0 6.500 3 5.500M12 5.500c4 1 4.500 4 0 5" />
        <path d="M9 8.500v4.500l3-2.500z" fill="#444" strokeWidth=".5" />
        <path d="M7.500 5.500v5M5 8h5" stroke="#1b8fe6" strokeWidth="1.5" />
      </g>
    ),
  },
  {
    name: 'Regarder',
    art: (
      <g fill="none" stroke="#444" strokeWidth="1.3">
        <path d="M.8 6h14.400v9H.8zM2 5l5-3-1 2 6-3-1 3" />
        <path d="M4 9h8v3H4z" fill="#ccc" />
      </g>
    ),
  },
  {
    name: 'Panoramique',
    art: (
      <path
        d="M6 15.500C4 13 2 10 .8 8.500c.8-1.300 2-.5 3.200 1L3 3c.8-1.400 1.800-1 2 0l1 4V1c.5-1.200 1.800-1.200 2 0l.3 5.800L9.500 1.500c.6-1 1.700-.6 1.700.4L11 7.500l1.700-3.700c.8-.8 1.700-.3 1.500.6L13 11c-.3 2-1 3-1.500 4.500z"
        fill="#fff"
        stroke="#444"
      />
    ),
  },
  {
    name: 'Zoom',
    art: (
      <g stroke="#444">
        <circle cx="5.500" cy="7" r="4.700" fill="#dcecef" />
        <path d="M9 10.500l4.500 4.500" strokeWidth="2.600" />
        <path d="M13 0v5M10.500 2.500h5M10.500 6.500h5" strokeWidth="1.100" />
      </g>
    ),
  },
  {
    name: 'Fenêtre de zoom',
    caret: true,
    art: (
      <g stroke="#444">
        <path d="M.5.5h15v15H.5z" fill="none" stroke="#777" strokeDasharray="2 1.500" />
        <circle cx="7" cy="7" r="5.800" fill="#dcecef" />
        <path d="M11 11l4.500 4.500" strokeWidth="2.800" />
      </g>
    ),
  },
  {
    name: "Paramètres d'affichage",
    caret: true,
    art: (
      <g stroke="#444">
        <path d="M.6.6h14.800v11.500H.6z" fill="#e6e6e6" />
        <path d="M3 3h10v7H3z" fill="#8fb4e0" stroke="#3f5f8f" />
        <path d="M6 12v3H4.500h7H10v-3" fill="#ddd" />
      </g>
    ),
  },
  {
    name: 'Grille et accrochage',
    caret: true,
    art: (
      <g stroke="#777" strokeWidth=".9">
        <path d="M.5.5h15v15H.5z" fill="#eee" stroke="#444" strokeWidth="1.200" />
        <path d="M3.500 1v14M6.500 1v14M9.500 1v14M12.500 1v14M1 3.500h14M1 6.500h14M1 9.500h14M1 12.500h14" />
      </g>
    ),
  },
  {
    name: 'Fenêtres',
    caret: true,
    art: (
      <g stroke="#3f5578" fill="#b4cbea">
        <path d="M.6 1.600h7v6h-7zM8.400 1.600h7v6h-7zM.6 8.400h7v6h-7zM8.400 8.400h7v6h-7z" />
        <path d="M2.500 3.500h3v2h-3zM10.500 3.500h3v2h-3zM2.500 10.500h3v2h-3zM10.500 10.500h3v2h-3z" fill="#86a9d8" strokeWidth=".6" />
      </g>
    ),
  },
];

const ViewToolbar = () => (
  <div className="absolute bottom-[6px] left-1/2 flex h-6 -translate-x-1/2 items-center gap-[6px] bg-[#f1f1f1] pr-1 pl-[3px]">
    {viewTools.map((tool) => (
      <button
        key={tool.name}
        aria-label={tool.name}
        className={tool.caret ? 'flex items-center gap-[3px]' : 'px-[2px]'}
      >
        <svg width="16" height="16" viewBox="0 0 16 16">{tool.art}</svg>
        {tool.caret && <Caret />}
      </button>
    ))}
  </div>
);

const Comments = () => (
  <section className="mt-auto w-[304px] pb-1 pl-1">
    <div className="flex h-[25px] items-center border border-[#c8c8c8] bg-[#f1f1f1] pr-[11px] pl-6 text-[#5a5a5a]">
      <h2 className="flex-1">COMMENTAIRES</h2>
      <button aria-label="Afficher les commentaires">
        <svg width="10" height="10" viewBox="0 0 10 10">
          <circle cx="5" cy="5" r="5" fill="#222" />
          <path d="M2 4.300h2.300V2h1.400v2.300H8v1.400H5.700V8H4.300V5.700H2z" fill="#fff" />
        </svg>
      </button>
    </div>
  </section>
);

const playback = [
  { name: 'Début', d: 'M0 0h2v12H0zM11 0v12L3 6z' },
  { name: 'Pas arrière', d: 'M9 0v12L0 6zM10 4h2v5h-2z' },
  { name: 'Lecture', d: 'M0-1l12 7-12 7z' },
  { name: 'Pas avant', d: 'M3 0v12l9-6zM0 4h2v5H0z' },
  { name: 'Fin', d: 'M1 0v12l8-6zM10 0h2v12h-2z' },
];

const SketchFeature = () => (
  <svg width="16" height="16" viewBox="0 0 16 16" fill="none">
    <path d="M3 1.500h10M1.500 3v10M13.500 3v5M3 14.500h6" stroke="#666" />
    <path d="M0 0h2.500v2.500H0zM12.500 0H15v2.500h-2.500zM0 13.500h2.500V16H0z" fill="#1b8fe6" />
    <path d="M9 13.500l4-4 2 2-4 4-2.500.5z" fill="#f7b84a" />
    <path d="M13 9.500l1.500-1.500 2 2-1.500 1.500z" fill="#e5484d" />
  </svg>
);

const Timeline = () => (
  <footer className="flex h-[50px] shrink-0 border-t-[3px] border-[#c8c8c8] bg-[#f1f1f1]">
    <div className="flex items-center gap-[13px] pl-[11px]">
      {playback.map((p) => (
        <button key={p.name} aria-label={p.name}>
          <svg width="12" height="12" viewBox="0 0 12 12" className="overflow-visible fill-[#666]"><path d={p.d} /></svg>
        </button>
      ))}
    </div>
    <div className="flex pl-[23px]">
      <div className="pt-[15px]">
        <div className="flex gap-2">
          <button aria-label="Esquisse 1"><SketchFeature /></button>
          <button aria-label="Plan 1"><svg width="16" height="16" viewBox="0 0 32 32" fill="none"><PlaneShape /></svg></button>
          <button aria-label="Esquisse 2"><SketchFeature /></button>
        </div>
        <svg width="50" height="8" viewBox="0 0 50 8" className="mt-[2px] ml-2" fill="none" stroke="#c4c4c4" strokeWidth="2">
          <path d="M1 0v6h47V0M24.500 1v5" />
        </svg>
      </div>
      <svg width="12" height="32" viewBox="0 0 12 32" className="-ml-[2px] mt-[9px] fill-[#666]">
        <path d="M0 0h12v4L7 9v23H5V9L0 4z" />
      </svg>
    </div>
    <button aria-label="Paramètres" className="mr-[14px] ml-auto"><Gear size={15} /></button>
  </footer>
);

export default function App() {
  return (
    <div className="flex h-screen bg-linear-to-b from-[#568da3] via-[#4a7486] via-60% to-[#151515] to-90% pt-[5px] pr-[7px] pb-[7px] pl-[10px] font-['Noto_Sans',sans-serif] text-[11px]">
      <div className="flex min-w-0 flex-1 flex-col overflow-hidden rounded-[10px]">
        <TitleBar />
        <QuickBar />
        <Ribbon />
        <main className="relative flex min-h-0 flex-1 flex-col border-t-[3px] border-[#f1f1f1]">
          <Scene />
          <div className="relative flex flex-1 flex-col">
            <Navigator />
            <Comments />
          </div>
          <SaveNotice />
          <ViewCube />
          <ViewToolbar />
        </main>
        <Timeline />
      </div>
    </div>
  );
}
